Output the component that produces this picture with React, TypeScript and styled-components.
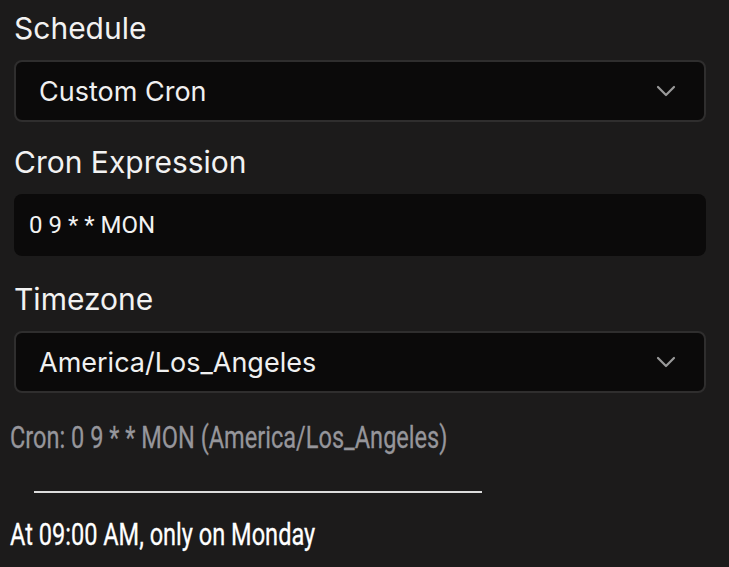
import styled, { createGlobalStyle } from "styled-components";

const GlobalStyle = createGlobalStyle`
  html, body {
    margin: 0;
    padding: 0;
    background: #1c1b1b;
  }
  body {
    font-family: Inter, "Noto Sans", sans-serif;
    color: #f2f2f2;
  }
`;

const Page = styled.div`
  width: 729px;
  height: 567px;
  background: #1c1b1b;
  overflow: hidden;
  display: flex;
  flex-direction: column;
`;

const Form = styled.div`
  display: flex;
  flex-direction: column;
  padding: 10px 23px 0 14px;
`;

const Label = styled.div<{ $gap?: number }>`
  font-size: 30px;
  line-height: 36px;
  color: #f2f2f2;
  margin-top: ${(p) => p.$gap ?? 0}px;
  margin-bottom: 14px;
`;

const Select = styled.div`
  height: 62px;
  box-sizing: border-box;
  display: flex;
  align-items: center;
  justify-content: space-between;
  padding: 0 28px 0 23px;
  background: #0b0a0a;
  border: 2px solid #2f2e2e;
  border-radius: 8px;
  font-size: 27px;
  color: #f0f0f0;
`;

const Input = styled.div`
  height: 62px;
  box-sizing: border-box;
  display: flex;
  align-items: center;
  padding: 0 15px;
  background: #0b0a0a;
  border-radius: 8px;
  font-family: Roboto, "Liberation Sans", sans-serif;
  font-size: 24px;
  color: #f2f2f2;
`;

const Summary = styled.div`
  display: flex;
  flex-direction: column;
  padding: 0 10px;
  font-family: Roboto, "Liberation Sans", sans-serif;
  font-size: 31px;
`;

/* the reference renders these two lines in a condensed face */
const Condensed = styled.div`
  line-height: 36px;
  white-space: nowrap;
  transform: scaleX(0.76);
  transform-origin: left center;
  -webkit-text-stroke: 0.3px currentColor;
`;

const Hint = styled(Condensed)`
  color: #96969b;
  margin-top: 27px;
`;

const Rule = styled.hr`
  width: 448px;
  margin: 35px 0 0 24px;
  border: 0;
  height: 2px;
  background: #dcdcdc;
`;

const Human = styled(Condensed)`
  color: #ffffff;
  margin-top: 24px;
`;

const Chevron = () => (
  <svg width="20" height="12" viewBox="0 0 20 12" fill="none">
    <polyline
      points="2,2 10,10 18,2"
      stroke="#9a9a9a"
      strokeWidth="2.2"
      strokeLinecap="round"
      strokeLinejoin="round"
    />
  </svg>
);

export default function App() {
  return (
    <Page>
      <GlobalStyle />
      <Form>
        <Label>Schedule</Label>
        <Select>
          <span>Custom Cron</span>
          <Chevron />
        </Select>
        <Label $gap={22}>Cron Expression</Label>
        <Input>0 9 * * MON</Input>
        <Label $gap={25}>Timezone</Label>
        <Select>
          <span>America/Los_Angeles</span>
          <Chevron />
        </Select>
      </Form>
      <Summary>
        <Hint>Cron: 0 9 * * MON (America/Los_Angeles)</Hint>
        <Rule />
        <Human>At 09:00 AM, only on Monday</Human>
      </Summary>
    </Page>
  );
}
